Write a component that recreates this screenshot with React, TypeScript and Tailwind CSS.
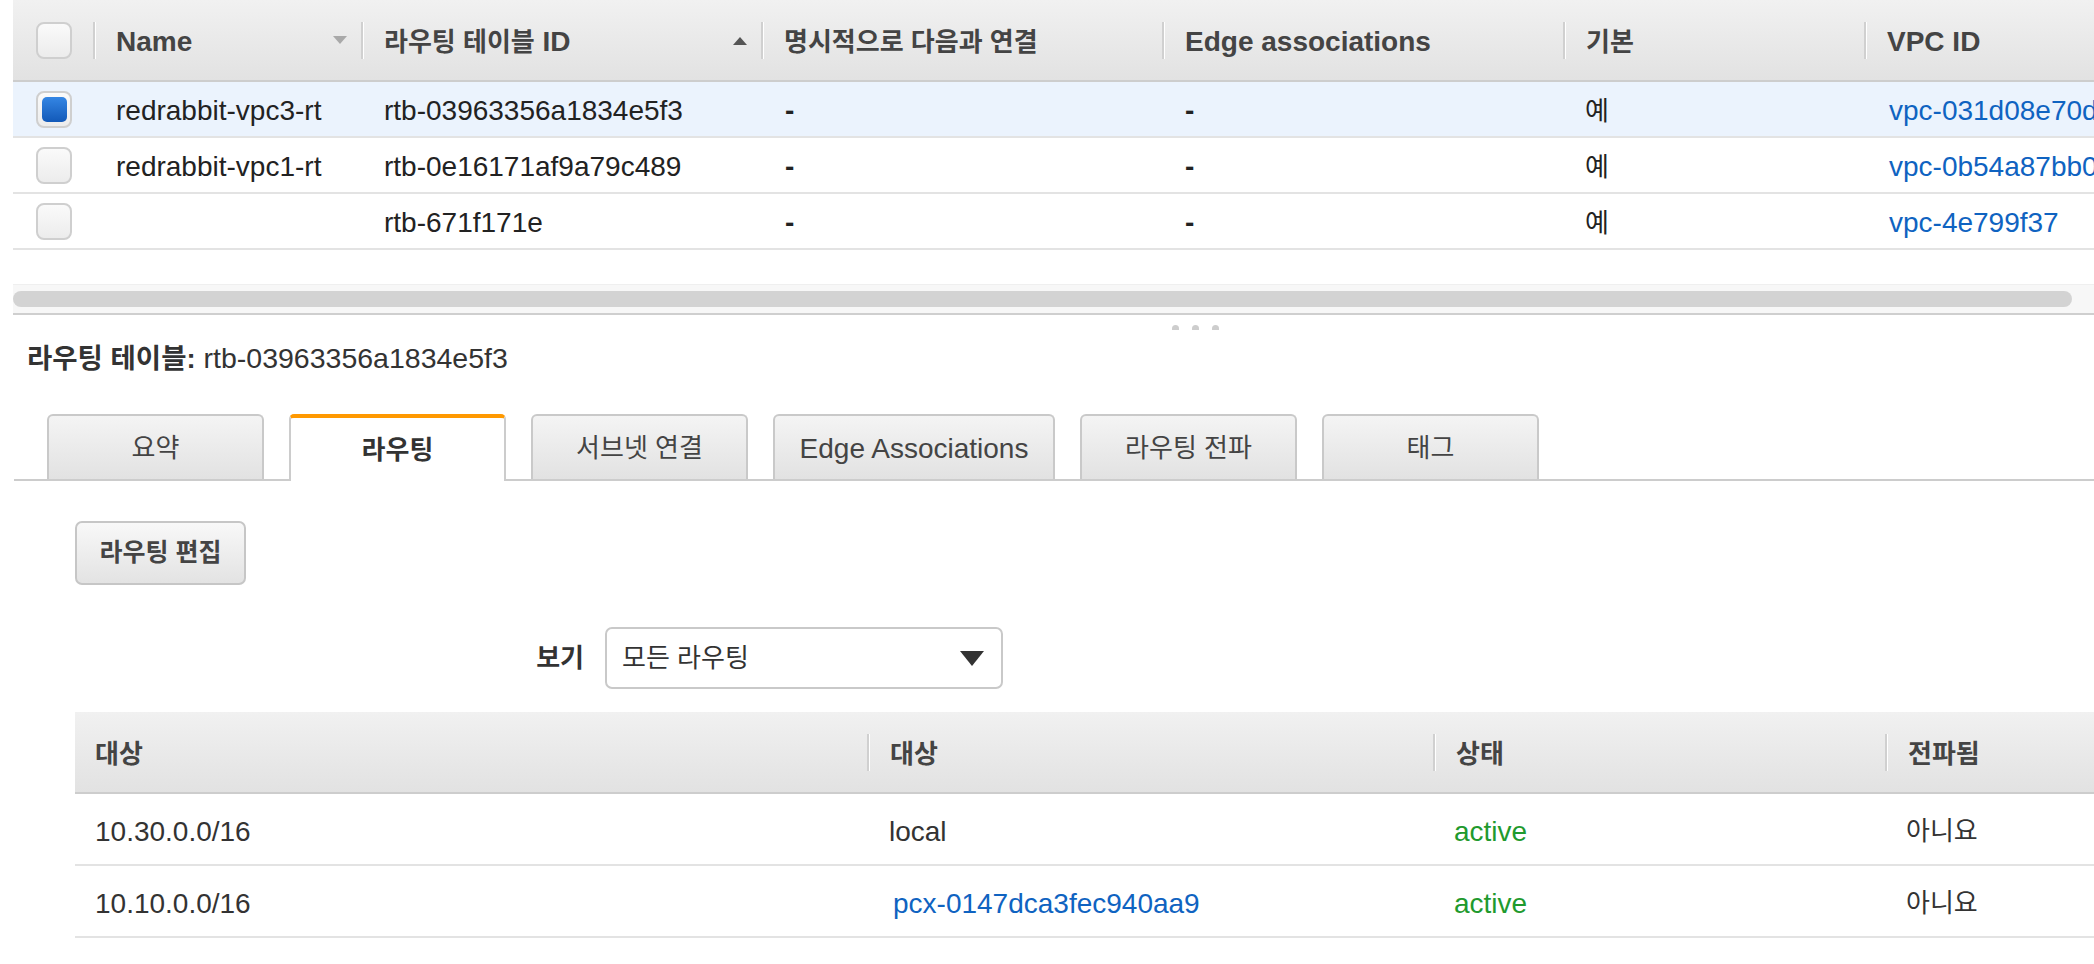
import React from 'react';

const ko = 'text-[26px]';

const Checkbox: React.FC<{ checked?: boolean }> = ({ checked }) => (
  <div className="flex h-[37px] w-[36px] items-center justify-center rounded-[8px] border-2 border-[#cfcfcf] bg-linear-to-b from-[#fafafa] to-[#ececec]">
    {checked && (
      <div className="h-[25px] w-[25px] rounded-[5px] bg-linear-to-b from-[#3486e4] to-[#1259b8]" />
    )}
  </div>
);

const Divider: React.FC = () => (
  <span className="h-[37px] w-[3px] shrink-0 border-l-2 border-r border-l-[#d0d0d0] border-r-white" />
);

const HCell: React.FC<{ children?: React.ReactNode; arrow?: 'up' | 'down'; divider?: boolean; pad?: string }> = ({
  children,
  arrow,
  divider = true,
  pad = 'pl-[20px]',
}) => (
  <div className="flex h-full items-center">
    {divider && <Divider />}
    <span className={`flex-1 whitespace-nowrap pt-[4px] ${pad}`}>{children}</span>
    {arrow === 'down' && (
      <svg width="14" height="9" viewBox="0 0 14 9" className="mr-[14px]">
        <polygon points="0,0 14,0 7,8" fill="#a9a9a9" />
      </svg>
    )}
    {arrow === 'up' && (
      <svg width="14" height="9" viewBox="0 0 14 9" className="mr-[14px]">
        <polygon points="0,9 14,9 7,1" fill="#555555" />
      </svg>
    )}
  </div>
);

const routeTables = [
  { name: 'redrabbit-vpc3-rt', id: 'rtb-03963356a1834e5f3', vpc: 'vpc-031d08e70d', selected: true },
  { name: 'redrabbit-vpc1-rt', id: 'rtb-0e16171af9a79c489', vpc: 'vpc-0b54a87bb0', selected: false },
  { name: '', id: 'rtb-671f171e', vpc: 'vpc-4e799f37', selected: false },
];

const routes = [
  { dest: '10.30.0.0/16', target: 'local', link: false },
  { dest: '10.10.0.0/16', target: 'pcx-0147dca3fec940aa9', link: true },
];

const tabs = ['요약', '라우팅', '서브넷 연결', 'Edge Associations', '라우팅 전파', '태그'];

const topCols = 'grid grid-cols-[80px_268px_400px_401px_401px_301px_1fr]';
const routeCols = 'grid grid-cols-[792px_566px_452px_1fr]';

const App: React.FC = () => {
  return (
    <div className="min-h-screen w-full overflow-hidden bg-white font-['Liberation_Sans','Noto_Sans_CJK_KR',sans-serif] text-[28px] text-[#222]">
      {/* Route table list */}
      <div className="ml-[13px]">
        <div className={`${topCols} h-[82px] border-b-2 border-[#cdcdcd] bg-linear-to-b from-[#f1f1f1] to-[#e2e2e2] font-bold text-[#444]`}>
          <div className="flex items-center pl-[23px]">
            <Checkbox />
          </div>
          <HCell arrow="down">Name</HCell>
          <HCell arrow="up">
            <span className={ko}>라우팅 테이블</span> ID
          </HCell>
          <HCell>
            <span className={ko}>명시적으로 다음과 연결</span>
          </HCell>
          <HCell>Edge associations</HCell>
          <HCell>
            <span className={ko}>기본</span>
          </HCell>
          <HCell>VPC ID</HCell>
        </div>
        {routeTables.map((rt) => (
          <div
            key={rt.id}
            className={`${topCols} h-[56px] items-center border-b-2 border-[#e3e3e3] ${rt.selected ? 'bg-[#ebf3fd]' : 'bg-white'}`}
          >
            <div className="flex items-center pl-[23px]">
              <Checkbox checked={rt.selected} />
            </div>
            <div className="whitespace-nowrap pl-[23px] pt-[4px]">{rt.name}</div>
            <div className="whitespace-nowrap pl-[23px] pt-[4px]">{rt.id}</div>
            <div className="pl-[24px] pt-[4px] font-bold">-</div>
            <div className="pl-[23px] pt-[4px] font-bold">-</div>
            <div className={`pl-[22px] pt-[4px] ${ko}`}>예</div>
            <div className="overflow-hidden whitespace-nowrap pl-[25px] pt-[4px] text-[#0f63c1]">{rt.vpc}</div>
          </div>
        ))}
        <div className="h-[34px]" />
        <div className="flex h-[31px] items-center border-b-2 border-t border-b-[#cfcfcf] border-t-[#efefef] bg-[#f7f7f7] pr-[22px]">
          <div className="h-[16px] flex-1 rounded-full bg-[#d3d3d3]" />
        </div>
      </div>

      {/* Splitter handle */}
      <div className="flex h-[26px] items-start gap-[13px] pl-[1172px] pt-[10px]">
        <span className="h-[5px] w-[7px] rounded-t-full bg-[#cdcdcd]" />
        <span className="h-[5px] w-[7px] rounded-t-full bg-[#cdcdcd]" />
        <span className="h-[5px] w-[7px] rounded-t-full bg-[#cdcdcd]" />
      </div>

      {/* Detail title */}
      <div className="h-[34px] pl-[27px] text-[28.5px] leading-[34px] text-[#333]">
        <span className="text-[27.5px] font-bold">라우팅 테이블:</span> rtb-03963356a1834e5f3
      </div>

      {/* Tabs */}
      <div className="ml-[14px] mt-[39px] flex h-[67px] items-end gap-[25px] border-b-2 border-[#cccccc] pl-[33px]">
        {tabs.map((t) => {
          const active = t === '라우팅';
          const w = t === 'Edge Associations' ? 'w-[282px]' : 'w-[217px]';
          const isKo = t !== 'Edge Associations';
          return active ? (
            <div
              key={t}
              className={`${w} -mb-[2px] flex h-[67px] items-center justify-center rounded-t-[5px] border-x-2 border-t-4 border-x-[#cccccc] border-t-[#ff9900] bg-white pt-[2px] font-bold text-[#333]`}
            >
              <span className={ko}>{t}</span>
            </div>
          ) : (
            <div
              key={t}
              className={`${w} flex h-[65px] items-center justify-center rounded-t-[6px] border-x-2 border-t-2 border-[#c9c9c9] bg-linear-to-b from-[#f4f4f4] to-[#e2e2e2] pt-[2px] text-[#444]`}
            >
              <span className={isKo ? ko : ''}>{t}</span>
            </div>
          );
        })}
      </div>

      {/* Routes panel */}
      <div className="pl-[75px]">
        <button className="mt-[40px] flex h-[64px] w-[171px] items-center justify-center rounded-[7px] border-2 border-[#c6c6c6] bg-linear-to-b from-[#f8f8f8] to-[#e3e3e3] font-bold text-[#444]">
          <span className="text-[25px]">라우팅 편집</span>
        </button>

        <div className="mt-[42px] flex items-center">
          <div className={`w-[509px] text-right font-bold text-[#333] ${ko}`}>보기</div>
          <div className="ml-[21px] flex h-[62px] w-[398px] items-center justify-between rounded-[7px] border-2 border-[#c9c9c9] bg-white pl-[15px] pr-[17px]">
            <span className={`text-[#333] ${ko}`}>모든 라우팅</span>
            <svg width="24" height="15" viewBox="0 0 24 15">
              <polygon points="0,0 24,0 12,15" fill="#333333" />
            </svg>
          </div>
        </div>

        <div className="mt-[23px]">
          <div className={`${routeCols} h-[82px] border-b-2 border-[#cdcdcd] bg-linear-to-b from-[#f1f1f1] to-[#e2e2e2] font-bold text-[#444]`}>
            <HCell divider={false}>
              <span className={ko}>대상</span>
            </HCell>
            <HCell>
              <span className={ko}>대상</span>
            </HCell>
            <HCell>
              <span className={ko}>상태</span>
            </HCell>
            <HCell>
              <span className={ko}>전파됨</span>
            </HCell>
          </div>
          {routes.map((r) => (
            <div key={r.dest} className={`${routeCols} h-[72px] items-center border-b-2 border-[#e3e3e3] pt-[5px] text-[#333]`}>
              <div className="pl-[20px]">{r.dest}</div>
              <div className={r.link ? 'pl-[26px] text-[#0f63c1]' : 'pl-[22px]'}>{r.target}</div>
              <div className="pl-[21px] text-[#1f9a2e]">active</div>
              <div className={`pl-[21px] ${ko}`}>아니요</div>
            </div>
          ))}
        </div>
      </div>
    </div>
  );
};

export default App;
